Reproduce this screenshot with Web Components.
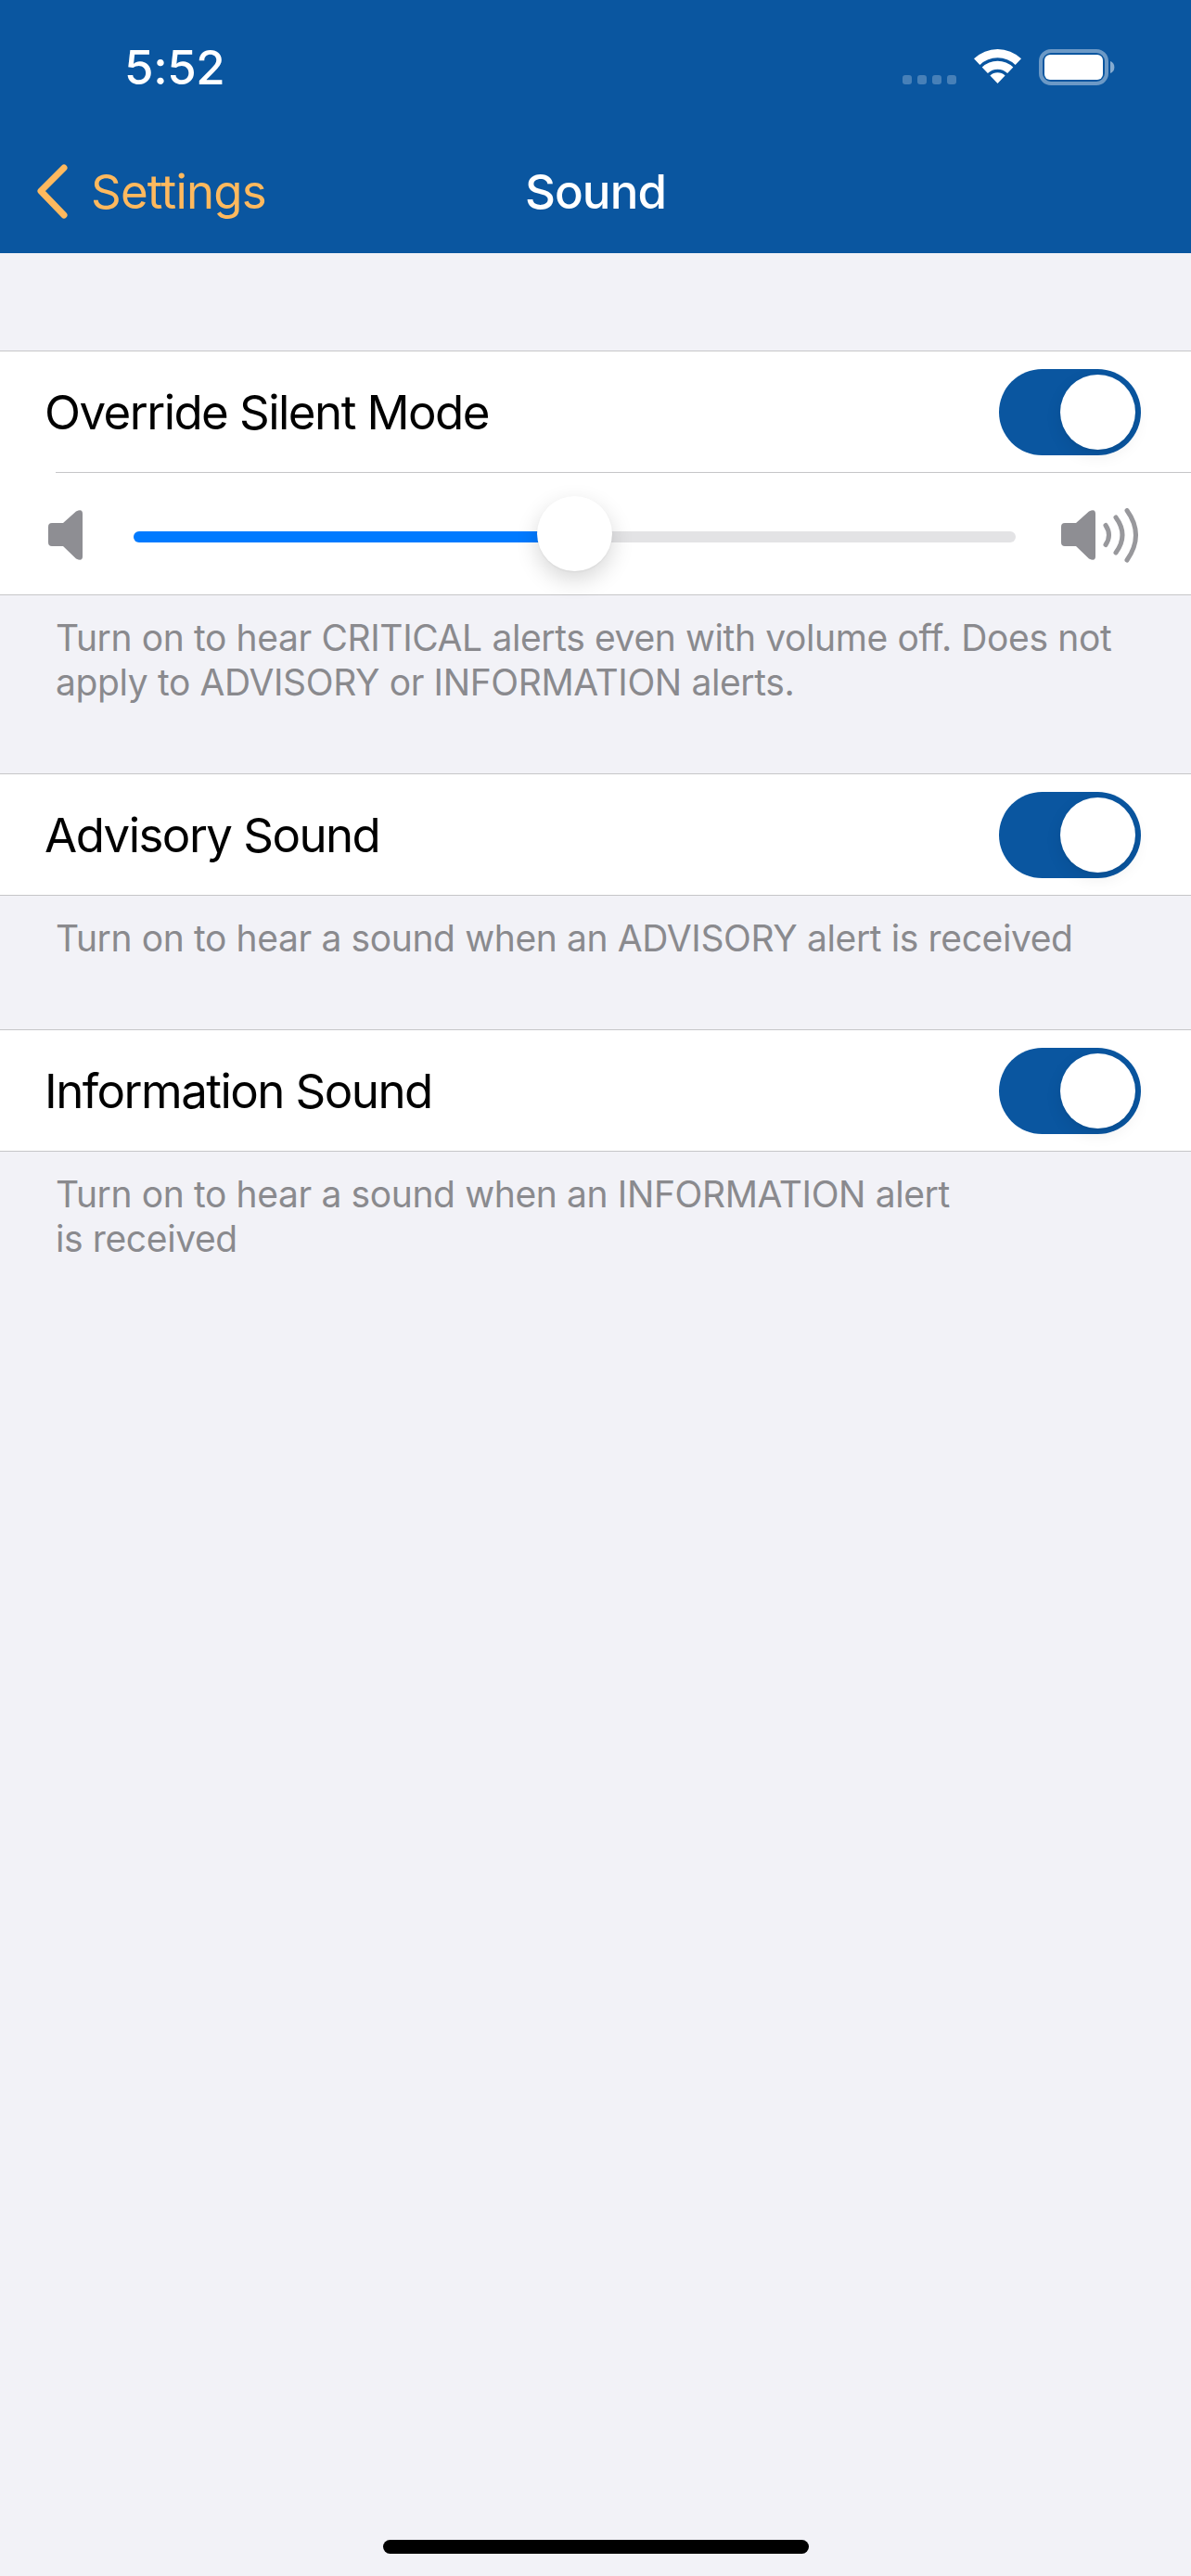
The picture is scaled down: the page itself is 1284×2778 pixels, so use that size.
<!DOCTYPE html>
<html lang="en">
<head>
<meta charset="utf-8">
<title>Sound</title>
<style>
  html, body { margin: 0; padding: 0; background: #f2f2f7; }
  body { font-family: Inter, "Liberation Sans", sans-serif; }
</style>
</head>
<body>
<sound-screen>
  <nav-header slot="header" time="5:52" back="Settings" title="Sound"></nav-header>

  <settings-group>
    <setting-row>Override Silent Mode</setting-row>
    <volume-slider value="50"></volume-slider>
  </settings-group>
  <group-footer style="height:192px">Turn on to hear CRITICAL alerts even with volume off. Does not<br>apply to ADVISORY or INFORMATION alerts.</group-footer>

  <settings-group>
    <setting-row>Advisory Sound</setting-row>
  </settings-group>
  <group-footer style="height:144px">Turn on to hear a sound when an ADVISORY alert is received</group-footer>

  <settings-group>
    <setting-row>Information Sound</setting-row>
  </settings-group>
  <group-footer>Turn on to hear a sound when an INFORMATION alert<br>is received</group-footer>
</sound-screen>

<script>
// components

class SoundScreen extends HTMLElement {
  constructor() {
    super();
    this.attachShadow({ mode: 'open' });
    this.shadowRoot.innerHTML = `
      <style>
        :host {
          display: flex;
          flex-direction: column;
          height: 2778px;
          background: #f2f2f7;
          overflow: hidden;
        }
        main {
          padding-top: 105px;
          flex: 1;
        }
        .home {
          flex: none;
          width: 459px;
          height: 15px;
          margin: 0 auto 24px;
          border-radius: 8px;
          background: #000;
        }
      </style>
      <slot name="header"></slot>
      <main><slot></slot></main>
      <div class="home"></div>
    `;
  }
}

customElements.define('sound-screen', SoundScreen);

class NavHeader extends HTMLElement {
  constructor() {
    super();
    this.attachShadow({ mode: 'open' });
    this.shadowRoot.innerHTML = `
      <style>
        :host {
          display: block;
          height: 273px;
          background: #0a56a0;
          color: #fff;
        }
        .status {
          height: 175px;
          box-sizing: border-box;
          padding: 46px 82px 0 134px;
          display: flex;
          align-items: flex-start;
          justify-content: space-between;
        }
        .time {
          font-size: 51px;
          font-weight: 500;
          line-height: 54px;
          letter-spacing: -0.4px;
        }
        .icons {
          display: flex;
          align-items: flex-start;
          margin-top: 7px;
        }
        .dots {
          display: flex;
          gap: 6px;
          margin: 28px 19px 0 0;
        }
        .dots i {
          width: 10px;
          height: 10px;
          border-radius: 3px;
          background: rgba(255,255,255,.25);
        }
        .wifi { margin-right: 19px; }
        svg { display: block; }
        .bar {
          display: grid;
          grid-template-columns: 1fr auto 1fr;
          align-items: center;
          height: 62px;
        }
        .back {
          display: flex;
          align-items: center;
          gap: 23px;
          padding-left: 39px;
          color: #ffb95e;
          font-size: 51px;
          letter-spacing: -0.8px;
        }
        .title {
          font-size: 51px;
          font-weight: 500;
          letter-spacing: -0.9px;
        }
      </style>
      <div class="status">
        <span class="time"></span>
        <div class="icons">
          <div class="dots"><i></i><i></i><i></i><i></i></div>
          <svg class="wifi" width="51" height="37" viewBox="0 0 51 37" fill="#fff">
            <path d="M0 10.2A37 37 0 0 1 51 10.2L44.6 17A27.7 27.7 0 0 0 6.4 17Z"/>
            <path d="M8.7 19.4A24.3 24.3 0 0 1 42.3 19.4L36.1 25.9A15.3 15.3 0 0 0 14.9 25.9Z"/>
            <path d="M17.4 28.5A11.7 11.7 0 0 1 33.6 28.5L25.5 37Z"/>
          </svg>
          <svg width="82" height="39" viewBox="0 0 82 39">
            <rect x="2" y="2" width="71" height="35" rx="11" fill="none" stroke="#fff" stroke-opacity=".4" stroke-width="4"/>
            <rect x="6" y="6" width="63" height="27" rx="6" fill="#fff"/>
            <path d="M77 13a7 7 0 0 1 0 13Z" fill="#fff" fill-opacity=".5"/>
          </svg>
        </div>
      </div>
      <div class="bar">
        <div class="back">
          <svg width="36" height="60" viewBox="0 0 36 60" fill="none" stroke="#ffb95e" stroke-width="7" stroke-linecap="round" stroke-linejoin="round">
            <path d="M30 5 L5 30 L30 56"/>
          </svg>
          <span class="label"></span>
        </div>
        <div class="title"></div>
        <div></div>
      </div>
    `;
  }

  connectedCallback() {
    this.shadowRoot.querySelector('.time').textContent = this.getAttribute('time');
    this.shadowRoot.querySelector('.label').textContent = this.getAttribute('back');
    this.shadowRoot.querySelector('.title').textContent = this.getAttribute('title');
  }
}

customElements.define('nav-header', NavHeader);

class SettingsGroup extends HTMLElement {
  constructor() {
    super();
    this.attachShadow({ mode: 'open' });
    this.shadowRoot.innerHTML = `
      <style>
        :host {
          display: block;
          background: #fff;
          border-top: 1px solid #c6c6c8;
          border-bottom: 1px solid #c6c6c8;
        }
      </style>
      <slot></slot>
    `;
  }
}

customElements.define('settings-group', SettingsGroup);

class ToggleSwitch extends HTMLElement {
  constructor() {
    super();
    this.attachShadow({ mode: 'open' });
    this.shadowRoot.innerHTML = `
      <style>
        :host {
          display: flex;
          justify-content: flex-end;
          align-items: center;
          flex: none;
          box-sizing: border-box;
          width: 153px;
          height: 93px;
          padding-right: 6px;
          border-radius: 47px;
          background: #0a56a0;
        }
        .knob {
          width: 81px;
          height: 81px;
          border-radius: 50%;
          background: #fff;
          box-shadow: 0 6px 18px rgba(0,0,0,.08), 0 2px 3px rgba(0,0,0,.04);
        }
      </style>
      <div class="knob"></div>
    `;
  }
}

customElements.define('toggle-switch', ToggleSwitch);

class SettingRow extends HTMLElement {
  constructor() {
    super();
    this.attachShadow({ mode: 'open' });
    this.shadowRoot.innerHTML = `
      <style>
        :host {
          display: flex;
          align-items: center;
          justify-content: space-between;
          height: 130px;
          padding: 0 54px 0 48px;
          color: #000;
          font-size: 51px;
          letter-spacing: -1.55px;
        }
      </style>
      <span><slot></slot></span>
      <toggle-switch></toggle-switch>
    `;
  }
}

customElements.define('setting-row', SettingRow);

class VolumeSlider extends HTMLElement {
  constructor() {
    super();
    this.attachShadow({ mode: 'open' });
    this.shadowRoot.innerHTML = `
      <style>
        :host {
          display: block;
          position: relative;
        }
        :host::before {
          content: "";
          display: block;
          height: 1px;
          margin-left: 60px;
          background: #c6c6c8;
        }
        .wrap {
          display: flex;
          align-items: center;
          height: 131px;
          padding: 0 56px 0 52px;
        }
        svg { display: block; flex: none; }
        .vol-low { margin-top: 3px; }
        .vol-high { margin-top: 5px; }
        .track {
          position: relative;
          flex: 1;
          height: 12px;
          margin: 7px 49px 0 55px;
          border-radius: 6px;
          background: #e3e3e5;
        }
        .fill {
          height: 100%;
          border-radius: 6px 0 0 6px;
          background: #007aff;
        }
        .thumb {
          position: absolute;
          top: -38px;
          width: 81px;
          height: 81px;
          margin-left: -40.5px;
          border-radius: 50%;
          background: #fff;
          box-shadow: 0 9px 24px rgba(0,0,0,.16), 0 1px 2px rgba(0,0,0,.05);
        }
      </style>
      <div class="wrap">
        <svg class="vol-low" width="37" height="54" viewBox="0 0 37 54" fill="#8e8e93">
          <path d="M4 14H16L30 1.5Q37 -2 37 4V50Q37 56 30 52.5L16 39H4Q0 39 0 35V18Q0 14 4 14Z"/>
        </svg>
        <div class="track">
          <div class="fill"></div>
          <div class="thumb"></div>
        </div>
        <svg class="vol-high" width="84" height="60" viewBox="0 0 84 60">
          <path fill="#8e8e93" d="M4 16H16L30 3.5Q37 0 37 6V52Q37 58 30 54.5L16 41H4Q0 41 0 37V20Q0 16 4 16Z"/>
          <g fill="none" stroke="#98989c" stroke-width="5" stroke-linecap="round">
            <path d="M48 18.5Q55 29 48 39.5"/>
            <path d="M59 10Q73 29 59 48"/>
            <path d="M71 2.5Q90 29 71 56"/>
          </g>
        </svg>
      </div>
    `;
  }

  connectedCallback() {
    const value = this.getAttribute('value') || 50;
    this.shadowRoot.querySelector('.fill').style.width = value + '%';
    this.shadowRoot.querySelector('.thumb').style.left = value + '%';
  }
}

customElements.define('volume-slider', VolumeSlider);

class GroupFooter extends HTMLElement {
  constructor() {
    super();
    this.attachShadow({ mode: 'open' });
    this.shadowRoot.innerHTML = `
      <style>
        :host {
          display: block;
          box-sizing: border-box;
          padding: 22px 40px 0 60px;
          color: #8a8a8e;
          font-size: 39px;
          line-height: 48px;
          letter-spacing: -0.38px;
        }
      </style>
      <slot></slot>
    `;
  }
}

customElements.define('group-footer', GroupFooter);
</script>
</body>
</html>
